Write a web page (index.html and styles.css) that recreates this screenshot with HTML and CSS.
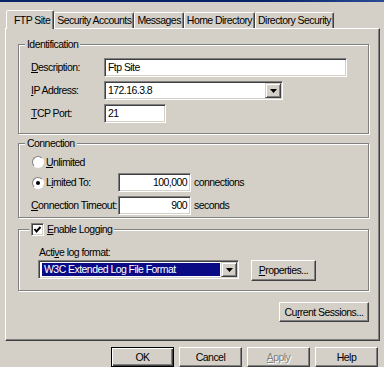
FILE: index.html
```html
<!DOCTYPE html>
<html lang="en">
<head>
    <meta charset="UTF-8">
    <title>FTP Site Properties</title>
    <link rel="stylesheet" href="styles.css">
</head>
<body>
    <div class="titlebar"></div>
    <div class="dialog">
        <div class="tabs">
            <div class="tab active">FTP Site</div>
            <div class="tab">Security Accounts</div>
            <div class="tab">Messages</div>
            <div class="tab">Home Directory</div>
            <div class="tab">Directory Security</div>
        </div>

        <div class="panel">
            <fieldset class="group ident">
                <legend>Identification</legend>
                <div class="field">
                    <span class="label"><u>D</u>escription:</span>
                    <div class="edit desc">Ftp Site</div>
                </div>
                <div class="field">
                    <span class="label"><u>I</u>P Address:</span>
                    <div class="combo ip">
                        <span class="combo-text">172.16.3.8</span>
                        <span class="drop"><svg width="7" height="4" viewBox="0 0 7 4"><polygon points="0,0 7,0 3.5,4" fill="#000"/></svg></span>
                    </div>
                </div>
                <div class="field">
                    <span class="label"><u>T</u>CP Port:</span>
                    <div class="edit port">21</div>
                </div>
            </fieldset>

            <fieldset class="group conn">
                <legend>Connection</legend>
                <div class="option">
                    <span class="radio"></span>
                    <span><u>U</u>nlimited</span>
                </div>
                <div class="field">
                    <span class="label long">
                        <span class="radio checked"></span>
                        <span>L<u>i</u>mited To:</span>
                    </span>
                    <div class="edit num">100,000</div>
                    <span class="unit">connections</span>
                </div>
                <div class="field">
                    <span class="label long"><u>C</u>onnection Timeout:</span>
                    <div class="edit num">900</div>
                    <span class="unit">seconds</span>
                </div>
            </fieldset>

            <fieldset class="group logging">
                <legend>
                    <span class="check"><svg width="9" height="9" viewBox="0 0 9 9"><polyline points="1.5,4 3.5,6.5 7.5,2" fill="none" stroke="#000" stroke-width="2"/></svg></span>
                    <span><u>E</u>nable Logging</span>
                </legend>
                <div class="caption">Acti<u>v</u>e log format:</div>
                <div class="field">
                    <div class="combo format">
                        <span class="combo-text selected">W3C Extended Log File Format</span>
                        <span class="drop"><svg width="7" height="4" viewBox="0 0 7 4"><polygon points="0,0 7,0 3.5,4" fill="#000"/></svg></span>
                    </div>
                    <button class="btn props"><u>P</u>roperties...</button>
                </div>
            </fieldset>

            <button class="btn sessions">Cu<u>r</u>rent Sessions...</button>
        </div>

        <div class="buttons">
            <button class="btn default">OK</button>
            <button class="btn">Cancel</button>
            <button class="btn disabled"><u>A</u>pply</button>
            <button class="btn">Help</button>
        </div>
    </div>
</body>
</html>
```

FILE: styles.css
```css
/* Classic Windows dialog */
body {
    margin: 0;
    height: 367px;
    overflow: hidden;
    background-color: #d4d0c8;
    font-family: "Liberation Sans", Arial, sans-serif;
    font-size: 10.5px;
    letter-spacing: -0.55px;
    line-height: 13px;
    white-space: nowrap;
    color: #000;
}

u {
    text-decoration-thickness: 1px;
}

.titlebar {
    height: 2px;
    background: linear-gradient(to right, #0a246a 70%, #2a4c94);
}

.dialog {
    padding: 0 4px 0 5px;
}

/* Tabs */
.tabs {
    display: flex;
    align-items: flex-end;
    height: 18px;
    padding: 8px 0 0 3px;
}

.tab {
    box-sizing: border-box;
    height: 16px;
    display: flex;
    align-items: center;
    padding: 0 2px;
    border: 1px solid;
    border-bottom: 0;
    border-color: #fff #404040 transparent #fff;
    border-radius: 2px 2px 0 0;
    box-shadow: inset -1px 0 0 #808080;
    background-color: #d4d0c8;
}

.tab.active {
    position: relative;
    z-index: 1;
    height: 19px;
    margin: 0 0 -1px -2px;
    padding: 0 3px 0 7px;
}

/* Tab page */
.panel {
    box-sizing: border-box;
    height: 313px;
    display: flex;
    flex-direction: column;
    padding: 9px 10px 0 12px;
    border: 1px solid;
    border-color: #fff #404040 #404040 #fff;
    box-shadow: inset -1px -1px 0 #808080;
}

.group {
    min-width: 0;
    margin: 0;
    border: 1px solid #808080;
    box-shadow: 1px 1px 0 #fff, inset 1px 1px 0 #fff;
    display: flex;
    flex-direction: column;
}

.group legend {
    margin-left: -6px;
    padding: 0 2px;
    background-color: #d4d0c8;
}

.ident {
    padding: 7px 0 10px 12px;
    gap: 4px;
}

.conn {
    margin-top: 3px;
    padding: 5px 0 2px 12px;
    gap: 4px;
}

.logging {
    margin-top: 5px;
    padding: 10px 0 9px 19px;
}

.logging legend {
    display: flex;
    align-items: center;
    gap: 3px;
    margin-left: -9px;
}

.field {
    display: flex;
    align-items: center;
    height: 19px;
}

.label {
    width: 73px;
    flex-shrink: 0;
}

.label.long {
    width: 87px;
    display: flex;
    align-items: center;
}

.option {
    display: flex;
    align-items: center;
    height: 14px;
}

.unit {
    margin-left: 3px;
}

/* Sunken edit boxes */
.edit, .combo {
    box-sizing: border-box;
    height: 19px;
    border: 1px solid;
    border-color: #808080 #fff #fff #808080;
    box-shadow: inset 1px 1px 0 #404040, inset -1px -1px 0 #d4d0c8;
    background-color: #fff;
}

.edit {
    padding: 2px 3px 0;
}

.desc {
    width: 243px;
}

.port {
    width: 62px;
}

.num {
    width: 73px;
    text-align: right;
}

.combo {
    display: flex;
    padding: 1px;
}

.ip {
    width: 179px;
}

.format {
    width: 201px;
}

.combo-text {
    flex: 1;
    padding: 1px 2px 0;
}

.combo-text.selected {
    margin: 1px 1px 1px 2px;
    padding: 0 2px;
    background-color: #0a0a84;
    color: #fff;
}

.drop {
    box-sizing: border-box;
    width: 16px;
    display: flex;
    align-items: center;
    justify-content: center;
    border: 1px solid;
    border-color: #d4d0c8 #404040 #404040 #d4d0c8;
    box-shadow: inset 1px 1px 0 #fff, inset -1px -1px 0 #808080;
    background-color: #d4d0c8;
}

/* Radio and check */
.radio {
    box-sizing: border-box;
    width: 12px;
    height: 12px;
    margin: 0 2px 0 1px;
    border: 1px solid;
    border-color: #808080 #fff #fff #808080;
    border-radius: 50%;
    background-color: #fff;
    display: flex;
    align-items: center;
    justify-content: center;
}

.radio.checked::after {
    content: "";
    width: 4px;
    height: 4px;
    border-radius: 50%;
    background-color: #000;
}

.check {
    box-sizing: border-box;
    width: 13px;
    height: 13px;
    border: 1px solid;
    border-color: #808080 #fff #fff #808080;
    box-shadow: inset 1px 1px 0 #404040, inset -1px -1px 0 #d4d0c8;
    background-color: #fff;
    display: flex;
    align-items: center;
    justify-content: center;
}

.caption {
    padding-left: 1px;
}

.logging .field {
    align-items: flex-start;
    height: 21px;
    margin-top: 1px;
    gap: 12px;
}

/* Push buttons */
.btn {
    box-sizing: border-box;
    height: 20px;
    padding: 0;
    font: inherit;
    letter-spacing: inherit;
    color: #000;
    background-color: #d4d0c8;
    border: 1px solid;
    border-color: #fff #404040 #404040 #fff;
    box-shadow: inset -1px -1px 0 #808080;
}

.props {
    width: 65px;
    height: 21px;
}

.sessions {
    align-self: flex-end;
    width: 90px;
    margin-top: 11px;
}

.buttons {
    display: flex;
    justify-content: flex-end;
    gap: 5px;
    margin-top: 6px;
    padding-right: 2px;
}

.buttons .btn {
    width: 63px;
}

.btn.default {
    border: 1px solid #000;
    box-shadow: inset 1px 1px 0 #fff, inset -1px -1px 0 #404040, inset -2px -2px 0 #808080;
}

.btn.disabled {
    color: #808080;
    text-shadow: 1px 1px 0 #fff;
}
```
